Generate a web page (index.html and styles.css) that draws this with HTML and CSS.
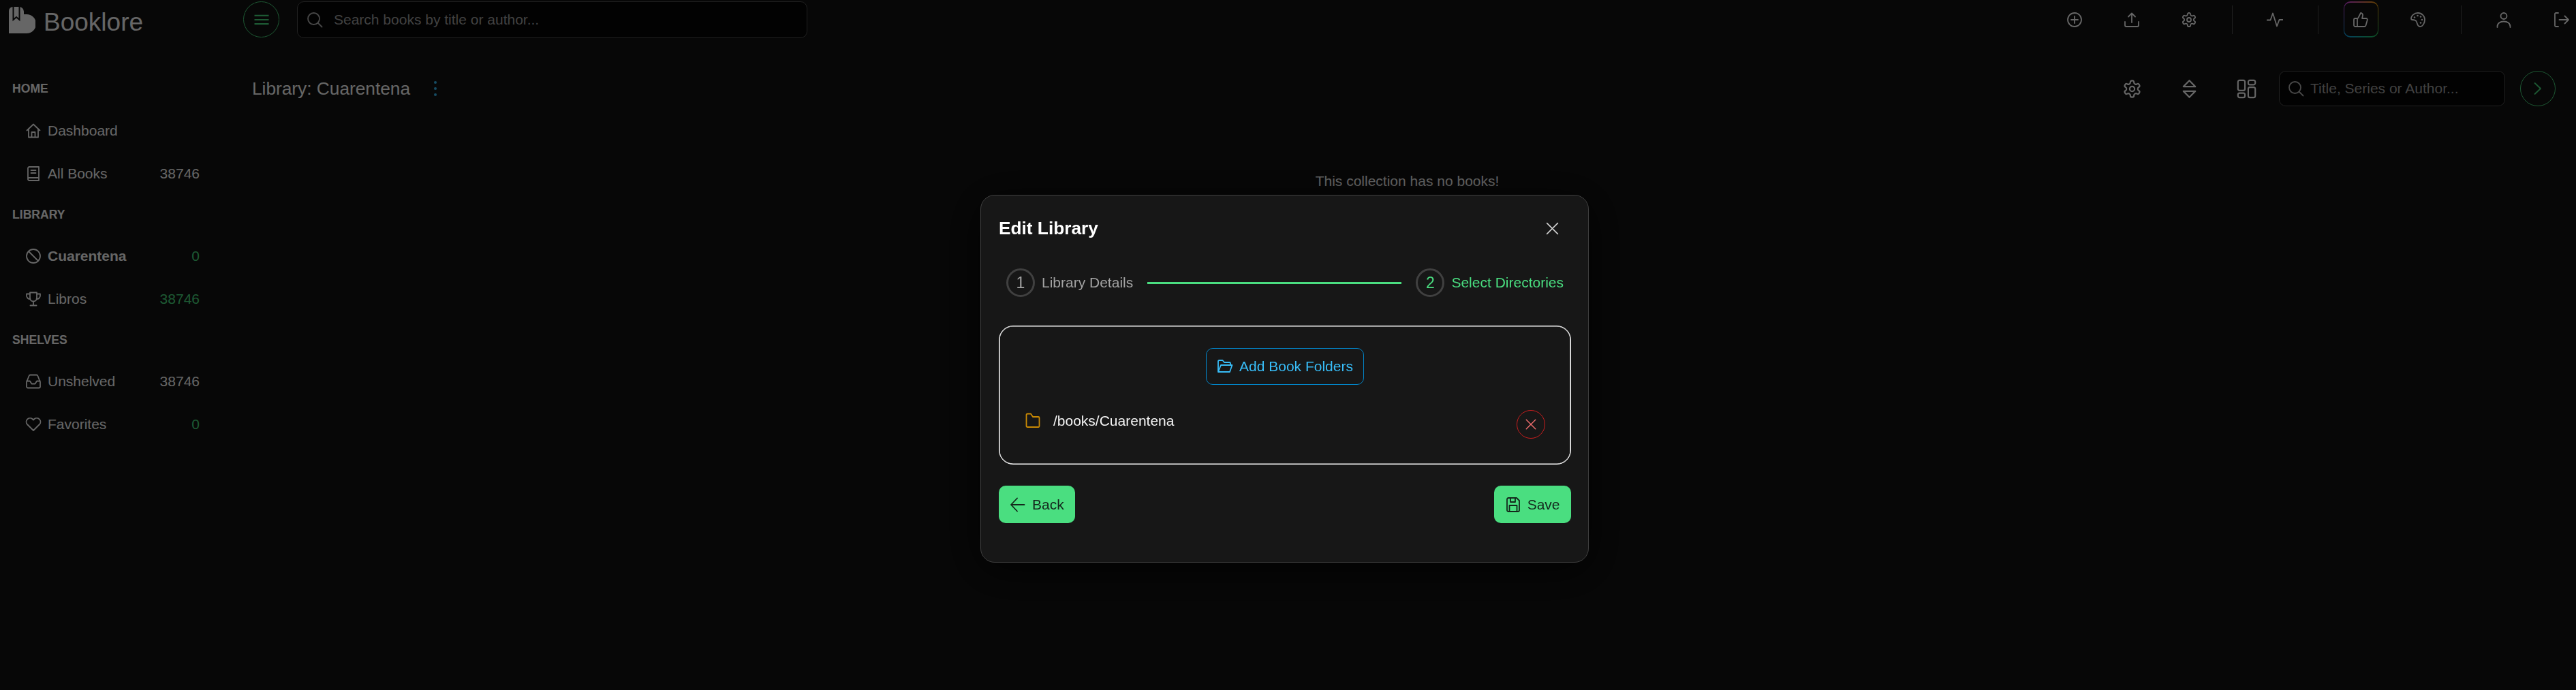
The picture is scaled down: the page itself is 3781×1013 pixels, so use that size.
FILE: index.html
```html
<!DOCTYPE html>
<html lang="en">
<head>
    <meta charset="UTF-8">
    <title>Booklore</title>
    <link rel="stylesheet" href="styles.css">
</head>
<body>
    <!-- Icon sprite -->
    <svg class="sprite" xmlns="http://www.w3.org/2000/svg">
        <symbol id="i-home" viewBox="0 0 24 24"><path d="M2.500 11.500 12 2.500l9.500 9M5 9.500V21.500h14V9.500M9.500 21.500V14h5v7.500"/></symbol>
        <symbol id="i-book" viewBox="0 0 24 24"><path d="M4 20V4a2 2 0 0 1 2-2h14v20H6a2 2 0 0 1-2-2 2 2 0 0 1 2-2h14M8.500 7h7M8.500 11h7"/></symbol>
        <symbol id="i-ban" viewBox="0 0 24 24"><circle cx="12" cy="12" r="10"/><path d="m5 5 14 14"/></symbol>
        <symbol id="i-trophy" viewBox="0 0 24 24"><path d="M7 2.500h10v8a5 5 0 0 1-10 0zM7 4.500H2v2.500a5 5 0 0 0 5.500 5M17 4.500h5v2.500a5 5 0 0 1-5.500 5M12 15.500v6M7.500 21.500h9"/></symbol>
        <symbol id="i-inbox" viewBox="0 0 24 24"><path d="m2 13 3.500-9a2 2 0 0 1 2-1.500h9a2 2 0 0 1 2 1.500L22 13v6.500a2 2 0 0 1-2 2H4a2 2 0 0 1-2-2zM2 11.500h5l2.500 4h5l2.500-4h5"/></symbol>
        <symbol id="i-heart" viewBox="0 0 24 24"><path d="M12 21 3 12a5.500 5.500 0 0 1 7.500-8L12 5.500 13.500 4A5.500 5.500 0 0 1 21 12z"/></symbol>
        <symbol id="i-bars" viewBox="0 0 24 24"><path d="M1.500 5.800h21M1.500 12h21M1.500 18.200h21"/></symbol>
        <symbol id="i-search" viewBox="0 0 24 24"><circle cx="10.500" cy="10.500" r="8.500"/><path d="m16.500 16.500 6 6"/></symbol>
        <symbol id="i-plus" viewBox="0 0 24 24"><circle cx="12" cy="12" r="10"/><path d="M12 7v10M7 12h10"/></symbol>
        <symbol id="i-upload" viewBox="0 0 24 24"><path d="M12 16V2.500M7 7.500l5-5 5 5M2 15v5a2 2 0 0 0 2 2h16a2 2 0 0 0 2-2v-5"/></symbol>
        <symbol id="i-cog" viewBox="0 0 24 24"><path d="M12.220 2h-.44a2 2 0 0 0-2 2v.18a2 2 0 0 1-1 1.730l-.43.25a2 2 0 0 1-2 0l-.15-.08a2 2 0 0 0-2.730.73l-.22.38a2 2 0 0 0 .73 2.730l.15.1a2 2 0 0 1 1 1.720v.51a2 2 0 0 1-1 1.740l-.15.09a2 2 0 0 0-.73 2.730l.22.38a2 2 0 0 0 2.730.73l.15-.08a2 2 0 0 1 2 0l.43.25a2 2 0 0 1 1 1.730V20a2 2 0 0 0 2 2h.44a2 2 0 0 0 2-2v-.18a2 2 0 0 1 1-1.730l.43-.25a2 2 0 0 1 2 0l.15.08a2 2 0 0 0 2.730-.73l.22-.39a2 2 0 0 0-.73-2.730l-.15-.08a2 2 0 0 1-1-1.740v-.5a2 2 0 0 1 1-1.740l.15-.09a2 2 0 0 0 .73-2.730l-.22-.38a2 2 0 0 0-2.730-.73l-.15.08a2 2 0 0 1-2 0l-.43-.25a2 2 0 0 1-1-1.730V4a2 2 0 0 0-2-2z"/><circle cx="12" cy="12" r="3"/></symbol>
        <symbol id="i-pulse" viewBox="0 0 24 24"><path d="M0.500 12.500h5L9 2.500l6 19 3.500-9.500h5"/></symbol>
        <symbol id="i-thumb" viewBox="0 0 24 24"><path d="M7 10v12M15 5.880 14 10h5.830a2 2 0 0 1 1.920 2.560l-2.330 8A2 2 0 0 1 17.500 22H4a2 2 0 0 1-2-2v-8a2 2 0 0 1 2-2h2.760a2 2 0 0 0 1.790-1.110L12 2a3.130 3.130 0 0 1 3 3.880Z"/></symbol>
        <symbol id="i-palette" viewBox="0 0 24 24"><path d="M22 12c0-5.500-4.500-10-10-10S2 6 2 10.500c0 1 .6 1.500 1.500 1.500 3.500 0 5.500.5 6.500 3 1 2.500 1.500 7 5 7 4 0 7-5 7-10z"/><circle class="dot" cx="7" cy="8.500" r="1.300"/><circle class="dot" cx="11.500" cy="6" r="1.300"/><circle class="dot" cx="16" cy="7.500" r="1.300"/><circle class="dot" cx="18" cy="12" r="1.300"/><circle class="dot" cx="16" cy="16.500" r="1.300"/></symbol>
        <symbol id="i-user" viewBox="0 0 24 24"><circle cx="12" cy="6.500" r="4.500"/><path d="M2.500 23v-1c0-4.500 4-7.500 9.500-7.500s9.500 3 9.500 7.500v1"/></symbol>
        <symbol id="i-logout" viewBox="0 0 24 24"><path d="M8 2H4.500A1.500 1.500 0 0 0 3 3.500v17A1.500 1.500 0 0 0 4.500 22H8M9.500 12H23M17.500 6.500 23 12l-5.500 5.500"/></symbol>
        <symbol id="i-sort" viewBox="0 0 24 24"><path d="M12 1.800 19.200 9.200H4.800zM4.800 14.800h14.400L12 22.200z"/></symbol>
        <symbol id="i-columns" viewBox="0 0 24 24"><rect x="1.500" y="1.500" width="8.500" height="12.500" rx="2"/><rect x="1.500" y="17" width="8.500" height="5.500" rx="2"/><rect x="14" y="1.500" width="8.500" height="5.500" rx="2"/><rect x="14" y="10" width="8.500" height="12.500" rx="2"/></symbol>
        <symbol id="i-chevron" viewBox="0 0 24 24"><path d="m7.500 4 8.500 8-8.500 8"/></symbol>
        <symbol id="i-times" viewBox="0 0 24 24"><path d="m3 3 18 18M21 3 3 21"/></symbol>
        <symbol id="i-folder-open" viewBox="0 0 24 24"><path d="M2 20V4.500A1.500 1.500 0 0 1 3.500 3h5l2.500 3h7.500A1.500 1.500 0 0 1 20 7.500V10M2 20h17l3.500-10H6z"/></symbol>
        <symbol id="i-folder" viewBox="0 0 24 24"><path d="M2.500 4A1.500 1.500 0 0 1 4 2.500h5L12 7h8a1.500 1.500 0 0 1 1.500 1.500v12A1.500 1.500 0 0 1 20 22H4a1.500 1.500 0 0 1-1.500-1.500z"/></symbol>
        <symbol id="i-arrow" viewBox="0 0 24 24"><path d="M20.500 12H1M10 2.500 1 12l9 9.500"/></symbol>
        <symbol id="i-save" viewBox="0 0 24 24"><path d="M5 2h12l4 4v14a2 2 0 0 1-2 2H5a2 2 0 0 1-2-2V4a2 2 0 0 1 2-2zM8 2v6h7V2M6.500 22v-9h11v9"/></symbol>
    </svg>

    <header class="topbar">
        <div class="logo">
            <svg class="logo-mark" viewBox="0 0 39 39">
                <path class="logo-body" d="M0 39V6a6 6 0 0 1 6-6h9a7 7 0 0 1 7 7v4h4a14 14 0 0 1 0 28z"/>
                <path class="logo-mark-line" d="M6.500 0v19l4.500-4 4.500 4V0"/>
            </svg>
            <span>Booklore</span>
        </div>
        <button class="menu-btn"><svg class="icon"><use href="#i-bars"/></svg></button>
        <div class="search top-search">
            <svg class="icon"><use href="#i-search"/></svg>
            <span>Search books by title or author...</span>
        </div>
        <div class="top-actions">
            <button class="icon-btn"><svg class="icon"><use href="#i-plus"/></svg></button>
            <button class="icon-btn"><svg class="icon"><use href="#i-upload"/></svg></button>
            <button class="icon-btn"><svg class="icon"><use href="#i-cog"/></svg></button>
            <div class="sep"></div>
            <button class="icon-btn"><svg class="icon"><use href="#i-pulse"/></svg></button>
            <div class="sep"></div>
            <button class="icon-btn rainbow"><svg class="icon"><use href="#i-thumb"/></svg></button>
            <button class="icon-btn"><svg class="icon"><use href="#i-palette"/></svg></button>
            <div class="sep"></div>
            <button class="icon-btn"><svg class="icon"><use href="#i-user"/></svg></button>
            <button class="icon-btn"><svg class="icon"><use href="#i-logout"/></svg></button>
        </div>
    </header>

    <div class="layout">
        <aside class="sidebar">
            <h4 class="nav-title">HOME</h4>
            <a class="nav-row"><svg class="icon"><use href="#i-home"/></svg><span>Dashboard</span></a>
            <a class="nav-row"><svg class="icon"><use href="#i-book"/></svg><span>All Books</span><em>38746</em></a>

            <h4 class="nav-title">LIBRARY</h4>
            <a class="nav-row active"><svg class="icon"><use href="#i-ban"/></svg><span>Cuarentena</span><em class="green">0</em></a>
            <a class="nav-row"><svg class="icon"><use href="#i-trophy"/></svg><span>Libros</span><em class="green">38746</em></a>

            <h4 class="nav-title">SHELVES</h4>
            <a class="nav-row"><svg class="icon"><use href="#i-inbox"/></svg><span>Unshelved</span><em>38746</em></a>
            <a class="nav-row"><svg class="icon"><use href="#i-heart"/></svg><span>Favorites</span><em class="green">0</em></a>
        </aside>

        <main class="content">
            <div class="toolbar">
                <h2>Library: Cuarentena</h2>
                <button class="dots"><i></i><i></i><i></i></button>
                <div class="tools">
                    <button class="tool-btn"><svg class="icon big"><use href="#i-cog"/></svg></button>
                    <button class="tool-btn"><svg class="icon big"><use href="#i-sort"/></svg></button>
                    <button class="tool-btn"><svg class="icon big"><use href="#i-columns"/></svg></button>
                </div>
                <div class="search filter-search">
                    <svg class="icon"><use href="#i-search"/></svg>
                    <span>Title, Series or Author...</span>
                </div>
                <button class="next-btn"><svg class="icon"><use href="#i-chevron"/></svg></button>
            </div>
            <p class="empty">This collection has no books!</p>
        </main>
    </div>

    <div class="mask">
        <section class="dialog">
            <div class="dialog-head">
                <h3>Edit Library</h3>
                <svg class="icon close"><use href="#i-times"/></svg>
            </div>

            <div class="stepper">
                <div class="step">
                    <span class="step-num">1</span>
                    <span>Library Details</span>
                </div>
                <div class="step-line"></div>
                <div class="step current">
                    <span class="step-num">2</span>
                    <span>Select Directories</span>
                </div>
            </div>

            <div class="folder-box">
                <button class="add-btn"><svg class="icon"><use href="#i-folder-open"/></svg>Add Book Folders</button>
                <div class="folder-row">
                    <svg class="icon folder"><use href="#i-folder"/></svg>
                    <span class="folder-path">/books/Cuarentena</span>
                    <button class="remove-btn"><svg class="icon"><use href="#i-times"/></svg></button>
                </div>
            </div>

            <div class="dialog-actions">
                <button class="primary"><svg class="icon"><use href="#i-arrow"/></svg>Back</button>
                <button class="primary"><svg class="icon"><use href="#i-save"/></svg>Save</button>
            </div>
        </section>
    </div>
</body>
</html>
```

FILE: styles.css
```css
:root {
    --green: #4ade80;
    --blue: #38bdf8;
    --line: #525252;
}

* {
    margin: 0;
    padding: 0;
    box-sizing: border-box;
}

body {
    height: 1013px;
    overflow: hidden;
    font-family: "Liberation Sans", Arial, sans-serif;
    font-size: 21px;
    color: #fff;
    background-color: #121212;
}

button {
    font: inherit;
    color: inherit;
    background: none;
    border: none;
}

.sprite {
    display: none;
}

.icon {
    display: block;
    flex: none;
    width: 24px;
    height: 24px;
    fill: none;
    stroke: currentColor;
    stroke-width: 1.8;
    stroke-linecap: round;
    stroke-linejoin: round;
}

.icon.big {
    width: 29px;
    height: 29px;
}

.dot {
    fill: currentColor;
    stroke: none;
}

/* Top bar */
.topbar {
    display: flex;
    align-items: center;
    height: 57px;
    padding-left: 13px;
}

.logo {
    display: flex;
    align-items: center;
    gap: 12px;
    width: 344px;
    padding-top: 1px;
    font-size: 37px;
    color: #fff;
}

.logo span {
    margin-top: 8px;
}

.logo-mark {
    width: 39px;
    height: 39px;
    margin-top: 1px;
}

.logo-body {
    fill: #fff;
}

.logo-mark-line {
    fill: none;
    stroke: #121212;
    stroke-width: 2;
}

.menu-btn {
    display: flex;
    align-items: center;
    justify-content: center;
    width: 53px;
    height: 53px;
    margin-right: 26px;
    color: var(--green);
    border: 1px solid var(--green);
    border-radius: 50%;
}

.menu-btn .icon {
    stroke-width: 2.2;
    stroke-linecap: butt;
}

.search {
    display: flex;
    align-items: center;
    gap: 16px;
    padding-left: 13px;
    color: #b4b4b4;
    background-color: #050505;
    border: 1px solid var(--line);
    border-radius: 10px;
}

.search span {
    color: #a3a3a3;
}

.top-search {
    width: 749px;
    height: 54px;
}

.top-actions {
    display: flex;
    align-items: center;
    gap: 42px;
    margin-left: auto;
    padding-right: 1px;
}

.icon-btn {
    display: flex;
    align-items: center;
    justify-content: center;
    width: 42px;
    height: 53px;
}

.sep {
    width: 1px;
    height: 42px;
    margin: 0 -0.5px;
    background-color: var(--line);
}

.rainbow {
    width: 51px;
    margin: 0 -4.5px;
    border-style: solid;
    border-color: transparent;
    border-width: 2px 1px;
    border-radius: 10px;
    background:
        linear-gradient(#121212, #121212) padding-box,
        conic-gradient(from 315deg, #d946ef, #f59e0b 25%, #22c55e 50%, #0ea5e9 75%, #d946ef) border-box;
}

/* Page layout */
.layout {
    display: flex;
}

.sidebar {
    flex: none;
    width: 349px;
    padding: 63px 0 0 18px;
}

.nav-title {
    height: 21px;
    margin: 19px 0 18px;
    font-size: 17.600px;
    font-weight: 700;
    line-height: 21px;
}

.nav-title:first-child {
    margin-top: 0;
    margin-bottom: 19px;
}

.nav-row {
    display: flex;
    align-items: center;
    gap: 9px;
    width: 276px;
    height: 63px;
    padding: 0 1px 0 19px;
}

.nav-row em {
    margin-left: auto;
    font-style: normal;
}

.nav-row .green {
    color: var(--green);
}

.nav-row.active span {
    font-weight: 700;
}

.content {
    flex: 1;
    padding: 47px 30px 0 21px;
}

.toolbar {
    display: flex;
    align-items: center;
    height: 52px;
}

.toolbar h2 {
    font-size: 26.250px;
    font-weight: 400;
}

.dots {
    display: flex;
    flex-direction: column;
    align-items: center;
    gap: 5px;
    margin-left: 35px;
}

.dots i {
    width: 4px;
    height: 4px;
    background-color: var(--blue);
    border-radius: 50%;
}

.tools {
    display: flex;
    gap: 32px;
    margin-left: auto;
}

.tool-btn {
    display: flex;
    align-items: center;
    justify-content: center;
    width: 52px;
    height: 52px;
}

.filter-search {
    width: 332px;
    height: 52px;
    margin: 0 22px;
    gap: 9px;
    padding-left: 12px;
}

.next-btn {
    display: flex;
    align-items: center;
    justify-content: center;
    width: 52px;
    height: 52px;
    color: var(--green);
    border: 1px solid var(--green);
    border-radius: 50%;
}

.empty {
    margin-top: 98px;
    padding-left: 10px;
    line-height: 24px;
    text-align: center;
}

/* Dialog */
.mask {
    position: fixed;
    inset: 0;
    display: flex;
    justify-content: center;
    align-items: flex-start;
    padding-right: 10px;
    background-color: rgba(0, 0, 0, 0.6);
}

.dialog {
    width: 893px;
    height: 540px;
    margin-top: 286px;
    padding: 33px 25px 0 26px;
    background-color: #171717;
    border: 1px solid #404040;
    border-radius: 21px;
    box-shadow: 0 10px 60px rgba(0, 0, 0, 0.7);
}

.dialog-head {
    display: flex;
    align-items: center;
    justify-content: space-between;
    height: 30px;
}

.dialog-head h3 {
    font-size: 26.250px;
    font-weight: 700;
}

.close {
    width: 21px;
    height: 21px;
    margin-right: 17px;
    color: #d4d4d4;
}

.stepper {
    display: flex;
    align-items: center;
    height: 42px;
    margin-top: 44px;
    padding: 0 11px;
}

.step {
    display: flex;
    align-items: center;
    gap: 10px;
    color: #a3a3a3;
}

.step-num {
    display: flex;
    align-items: center;
    justify-content: center;
    width: 42px;
    height: 42px;
    font-size: 23px;
    border: 3px solid #404040;
    border-radius: 50%;
}

.step-line {
    flex: 1;
    height: 3px;
    margin: 0 21px;
    background-color: var(--green);
}

.step.current {
    color: var(--green);
}

.folder-box {
    display: flex;
    flex-direction: column;
    align-items: center;
    height: 204px;
    margin-top: 42px;
    padding-top: 32px;
    background-color: #171717;
    border: 1px solid #fff;
    border-radius: 21px;
    box-shadow: inset 0 0 0 0.5px #fff;
}

.add-btn {
    display: flex;
    align-items: center;
    gap: 9px;
    height: 54px;
    padding: 0 15px;
    color: var(--blue);
    border: 1px solid #0284c7;
    border-radius: 10px;
}

.folder-row {
    display: flex;
    align-items: flex-start;
    width: 100%;
    margin-top: 37px;
    padding: 0 37px;
}

.folder {
    margin-top: 3px;
    color: #ca8a04;
}

.folder-path {
    margin: 4px 0 0 18px;
    line-height: 24px;
    color: #f5f5f5;
}

.remove-btn {
    display: flex;
    align-items: center;
    justify-content: center;
    width: 42px;
    height: 42px;
    margin-left: auto;
    color: #f87171;
    border: 1px solid #c81e1e;
    border-radius: 50%;
}

.remove-btn .icon {
    width: 18px;
    height: 18px;
}

.dialog-actions {
    display: flex;
    justify-content: space-between;
    margin-top: 31px;
}

.primary {
    display: flex;
    align-items: center;
    gap: 8.500px;
    height: 55px;
    padding: 0 16.500px;
    color: #14271c;
    background-color: var(--green);
    border-radius: 10px;
}
```
